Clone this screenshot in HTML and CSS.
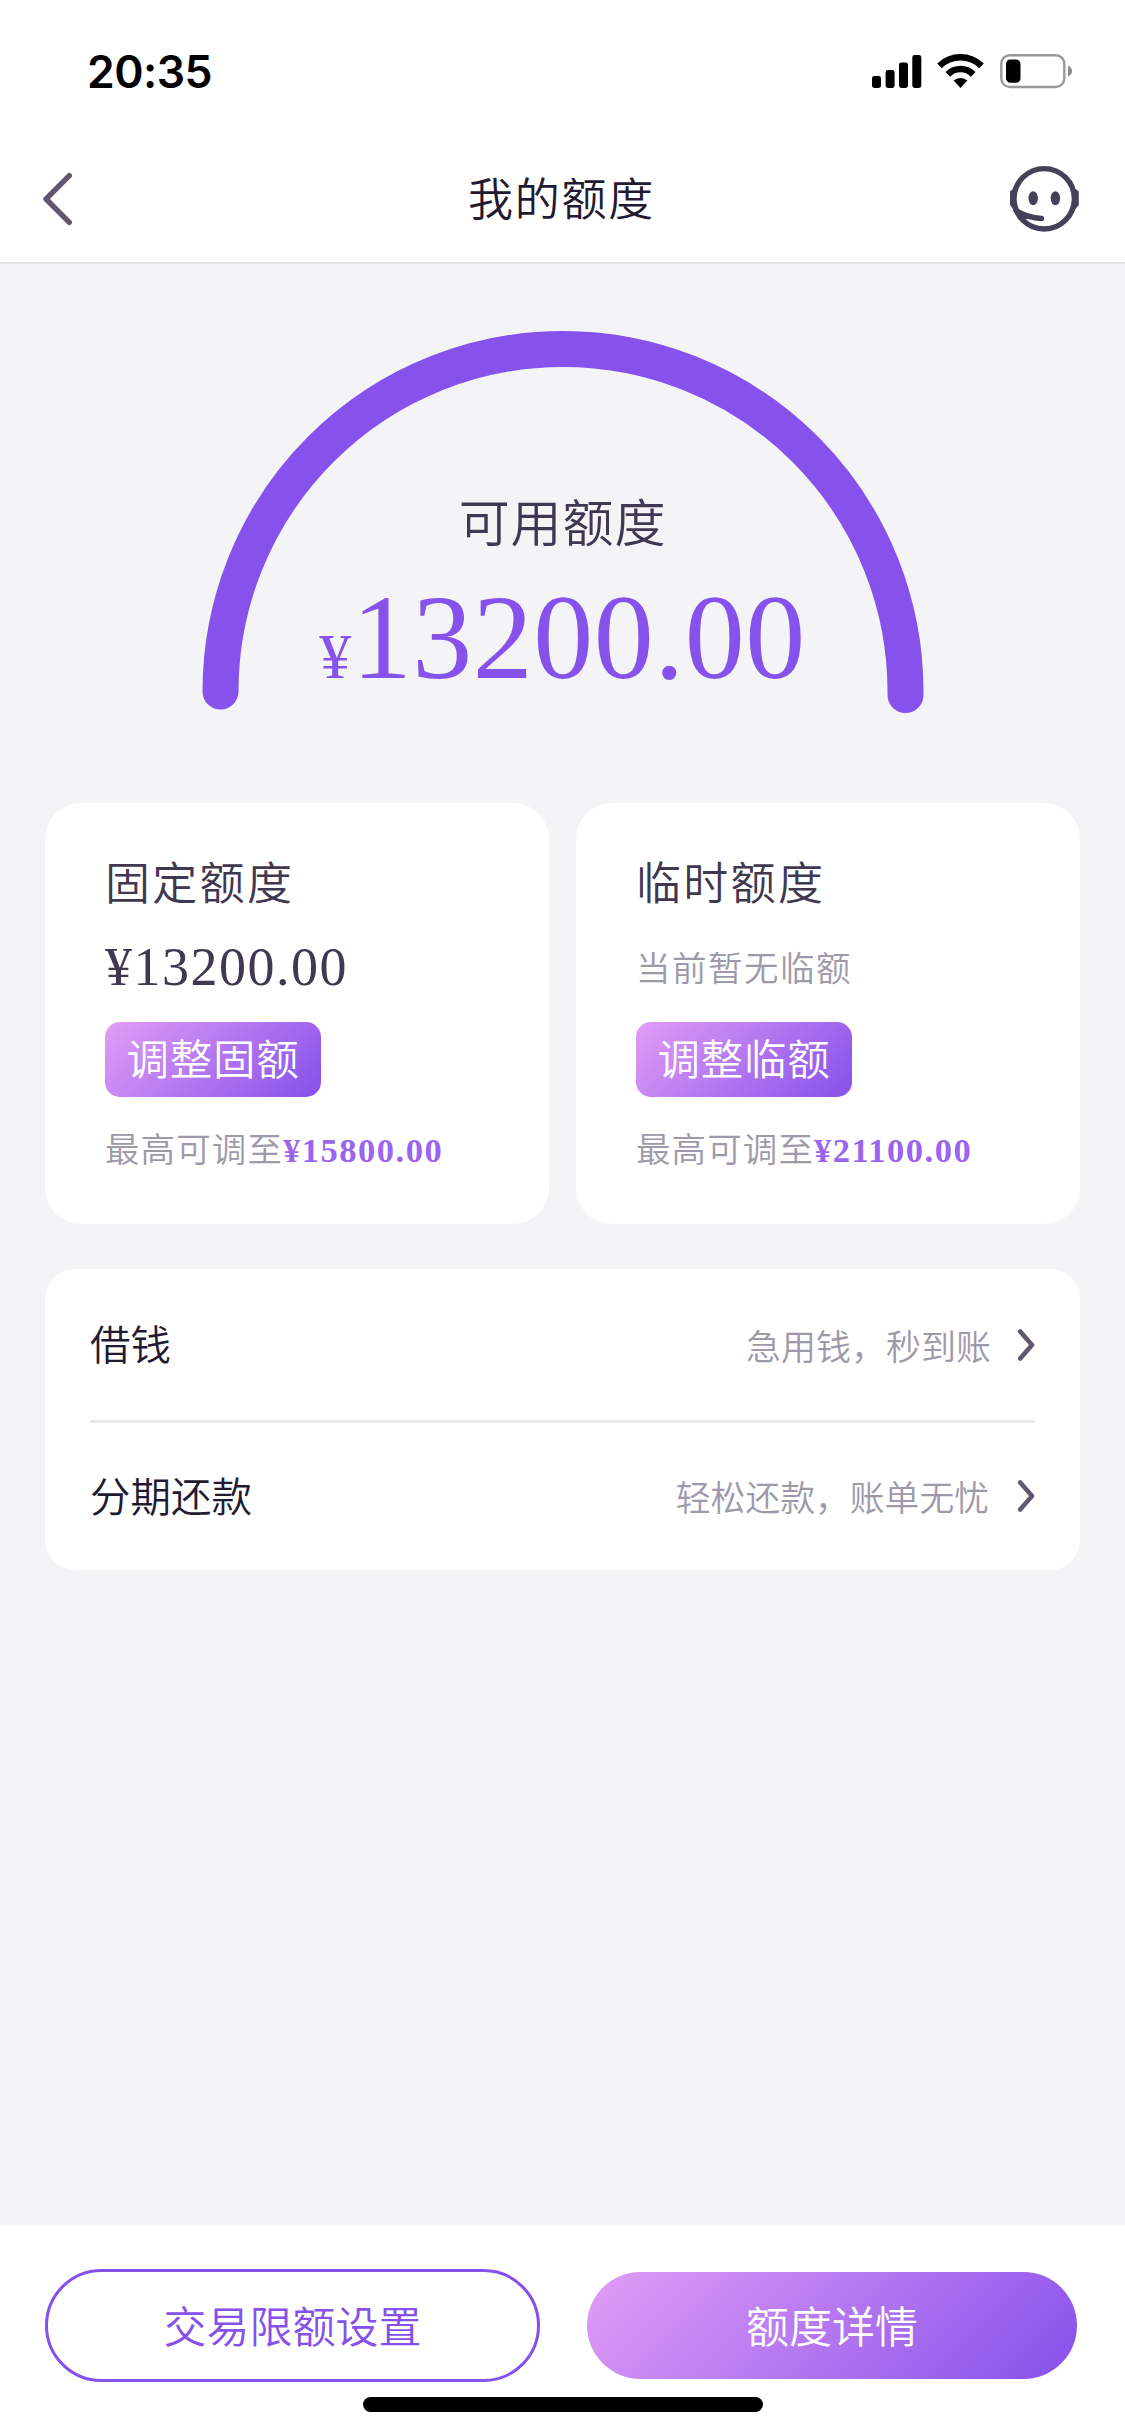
FILE: index.html
```html
<!DOCTYPE html>
<html lang="zh-CN">
<head>
<meta charset="utf-8">
<title>我的额度</title>
<link rel="stylesheet" href="styles.css">
</head>
<body>
<div class="screen">
  <header class="top">
    <div class="status">
      <span class="time">20:35</span>
      <svg class="status-icons" width="204" height="40" viewBox="870 51 204 40">
        <rect x="872" y="76" width="9" height="12" rx="2.4"/>
        <rect x="885.6" y="70" width="9" height="18" rx="2.4"/>
        <rect x="899" y="62.5" width="9" height="25.5" rx="2.4"/>
        <rect x="912.3" y="55" width="9" height="33" rx="2.4"/>
        <path d="M939.5 65.8A30 30 0 0 1 981.5 65.8M947.8 74.3A18 18 0 0 1 973.2 74.3" fill="none" stroke="#000" stroke-width="6.6"/>
        <path d="M960.5 88L953.6 80.6A10.4 10.4 0 0 1 967.4 80.6Z"/>
        <rect x="1001.3" y="55.2" width="63" height="31.8" rx="8.5" fill="none" stroke="#999" stroke-width="2.4"/>
        <path d="M1068 65.5Q1072 67.5 1072 71T1068 76.5Z" fill="#8c8c8c"/>
        <rect x="1006" y="59.5" width="14.5" height="23.3" rx="4.5"/>
      </svg>
    </div>
    <nav class="nav">
      <svg class="back" width="32" height="56" viewBox="42 171 32 56"><path d="M69.3 175.6L46 199L69.3 222.4" fill="none" stroke="#61586f" stroke-width="5.4" stroke-linecap="round" stroke-linejoin="round"/></svg>
      <h1 class="title">我的额度</h1>
      <svg class="service" width="70" height="70" viewBox="1009 164 70 70" fill="#464058">
        <circle cx="1044.2" cy="198.8" r="30.2" fill="none" stroke="#464058" stroke-width="5.4"/>
        <path d="M1010 191.5L1013 189H1016V209H1013L1010 205ZM1078.8 191.5L1075.5 189H1072.5V209H1075.5L1078.8 205Z"/>
        <ellipse cx="1033.2" cy="198.3" rx="4.7" ry="7"/>
        <ellipse cx="1055.4" cy="198.3" rx="4.7" ry="7"/>
        <path d="M1016 210.5Q1027 217.5 1041.5 218.5" fill="none" stroke="#464058" stroke-width="5.4" stroke-linecap="round"/>
        <path d="M1016 211L1020 220L1032 218Z"/>
      </svg>
    </nav>
  </header>

  <main class="content">
    <section class="gauge">
      <svg class="arc" width="722" height="383" viewBox="201.5 331 722 383"><path d="M220 691.5A342.5 342.5 0 0 1 905 691.5V695" fill="none" stroke="#8752eb" stroke-width="36" stroke-linecap="round"/></svg>
      <div class="gauge-text">
        <div class="gauge-label">可用额度</div>
        <div class="gauge-value"><span class="yen">¥</span>13200.00</div>
      </div>
    </section>

    <section class="cards">
      <article class="card">
        <h2 class="card-title">固定额度</h2>
        <div class="card-amount">¥13200.00</div>
        <button class="adjust">调整固额</button>
        <p class="hint">最高可调至<b>¥15800.00</b></p>
      </article>
      <article class="card">
        <h2 class="card-title">临时额度</h2>
        <div class="card-empty">当前暂无临额</div>
        <button class="adjust">调整临额</button>
        <p class="hint">最高可调至<b>¥21100.00</b></p>
      </article>
    </section>

    <section class="list">
      <a class="row">
        <span class="row-name">借钱</span>
        <span class="row-desc">急用钱，秒到账</span>
        <svg class="chevron" width="18" height="34" viewBox="0 0 18 34"><path d="M3.2 3.5L15 17L3.2 30.5" fill="none" stroke="#61586f" stroke-width="4.6" stroke-linecap="round" stroke-linejoin="round"/></svg>
      </a>
      <a class="row">
        <span class="row-name">分期还款</span>
        <span class="row-desc">轻松还款，账单无忧</span>
        <svg class="chevron" width="18" height="34" viewBox="0 0 18 34"><path d="M3.2 3.5L15 17L3.2 30.5" fill="none" stroke="#61586f" stroke-width="4.6" stroke-linecap="round" stroke-linejoin="round"/></svg>
      </a>
    </section>
  </main>

  <footer class="bottom">
    <div class="actions">
      <button class="btn btn-outline">交易限额设置</button>
      <button class="btn btn-fill">额度详情</button>
    </div>
    <div class="home-bar"></div>
  </footer>
</div>
</body>
</html>
```

FILE: styles.css
```css
* { box-sizing: border-box; margin: 0; padding: 0; }
body {
  width: 1125px;
  font-family: "Noto Sans CJK SC", sans-serif;
  font-weight: 350;
  color: #403850;
  background: #f4f4f7;
}
h1, h2 { font-weight: inherit; }
button { font-family: inherit; font-weight: inherit; border: 0; }
svg { display: block; flex: none; }

.screen { display: flex; flex-direction: column; height: 2435px; }

.top { height: 264px; background: #fff; border-bottom: 2px solid #e6e6e8; }
.status {
  display: flex;
  justify-content: space-between;
  align-items: center;
  height: 142px;
  padding: 0 51px 0 87px;
}
.time {
  padding-top: 2px;
  font: 600 44.5px/54px Inter, sans-serif;
  color: #000;
  letter-spacing: -0.5px;
}
.nav {
  display: flex;
  justify-content: space-between;
  align-items: center;
  height: 114px;
  padding: 0 46px 0 42px;
}
.title {
  flex: 1;
  padding: 0 0 5px 40px;
  text-align: center;
  font-size: 45px;
  line-height: 60px;
  letter-spacing: 1.8px;
  color: #211a31;
}

.content { flex: 1; padding: 67px 45px 0; }

.gauge { display: grid; justify-items: center; height: 472px; }
.arc, .gauge-text { grid-area: 1 / 1; }
.gauge-text { padding-top: 157px; text-align: center; }
.gauge-label { font-size: 51px; line-height: 64px; letter-spacing: 0.9px; }
.gauge-value {
  margin-top: 21px;
  font: 120px/130px "Liberation Serif", serif;
  letter-spacing: 0.5px;
  color: #8752eb;
}
.yen { font-size: 64px; }

.cards { display: grid; grid-template-columns: 1fr 1fr; gap: 27px; }
.card {
  height: 421px;
  padding: 48px 0 0 60px;
  border-radius: 36px;
  background: #fff;
  letter-spacing: 1.5px;
}
.card-title { font-size: 45px; line-height: 60px; letter-spacing: 2.3px; }
.card-amount, .card-empty { height: 111px; }
.card-amount { font: 54px/113px "Liberation Serif", serif; }
.card-empty { font-size: 34.5px; line-height: 110px; color: #9d99a9; }
.adjust {
  display: block;
  width: 216px;
  height: 75px;
  padding-bottom: 5px;
  border-radius: 15px;
  background: linear-gradient(135deg, #e19df6, #8650ea);
  font-size: 42.5px;
  line-height: 70px;
  letter-spacing: 0.8px;
  color: #fff;
}
.hint { margin-top: 25px; font-size: 34.5px; line-height: 50px; letter-spacing: 1.1px; color: #9d99a9; }
.hint b { font-family: "Liberation Serif", serif; font-weight: 700; letter-spacing: 1.5px; color: #9b64f0; }

.list {
  height: 301px;
  margin-top: 45px;
  padding: 0 45px;
  border-radius: 30px;
  background: #fff;
}
.row { display: flex; align-items: center; height: 151px; }
.row + .row { height: 149px; border-top: 3px solid #e9e9ec; }
.row-name { flex: 1; padding-bottom: 3px; font-size: 40.5px; line-height: 60px; color: #211a31; }
.row-desc { font-size: 35px; line-height: 50px; color: #9d99a9; }
.row + .row .row-desc { margin-right: 2px; font-size: 34.8px; }
.chevron { margin-left: 26px; }

.bottom { height: 210px; background: #fff; }
.actions { display: flex; justify-content: space-between; align-items: center; padding: 44px 48px 0 45px; }
.btn { padding-bottom: 4px; border-radius: 57px; font-size: 43px; line-height: 60px; }
.btn-outline { width: 495px; height: 113px; border: 3px solid #8650ea; background: #fff; color: #8650ea; }
.btn-fill { width: 490px; height: 107px; background: linear-gradient(135deg, #e19df6, #8650ea); color: #fff; }
.home-bar { width: 400px; height: 15px; margin: 15px auto 0; border-radius: 8px; background: #000; }
```
